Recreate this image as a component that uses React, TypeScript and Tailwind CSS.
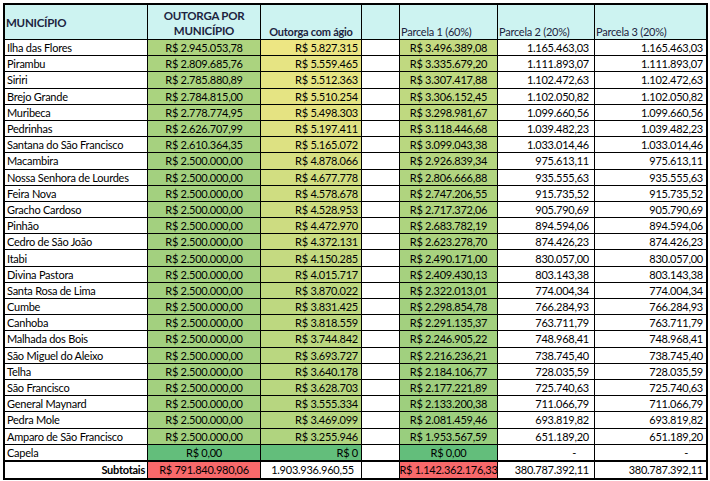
const rows: [string, string, number, string, number, string, number, string][] = [
  ["Ilha das Flores", "R$ 2.945.053,78", 2945053.78, "R$ 5.827.315", 5827315, "R$ 3.496.389,08", 3496389.08, "1.165.463,03"],
  ["Pirambu", "R$ 2.809.685,76", 2809685.76, "R$ 5.559.465", 5559465, "R$ 3.335.679,20", 3335679.2, "1.111.893,07"],
  ["Siriri", "R$ 2.785.880,89", 2785880.89, "R$ 5.512.363", 5512363, "R$ 3.307.417,88", 3307417.88, "1.102.472,63"],
  ["Brejo Grande", "R$ 2.784.815,00", 2784815, "R$ 5.510.254", 5510254, "R$ 3.306.152,45", 3306152.45, "1.102.050,82"],
  ["Muribeca", "R$ 2.778.774,95", 2778774.95, "R$ 5.498.303", 5498303, "R$ 3.298.981,67", 3298981.67, "1.099.660,56"],
  ["Pedrinhas", "R$ 2.626.707,99", 2626707.99, "R$ 5.197.411", 5197411, "R$ 3.118.446,68", 3118446.68, "1.039.482,23"],
  ["Santana do São Francisco", "R$ 2.610.364,35", 2610364.35, "R$ 5.165.072", 5165072, "R$ 3.099.043,38", 3099043.38, "1.033.014,46"],
  ["Macambira", "R$ 2.500.000,00", 2500000, "R$ 4.878.066", 4878066, "R$ 2.926.839,34", 2926839.34, "975.613,11"],
  ["Nossa Senhora de Lourdes", "R$ 2.500.000,00", 2500000, "R$ 4.677.778", 4677778, "R$ 2.806.666,88", 2806666.88, "935.555,63"],
  ["Feira Nova", "R$ 2.500.000,00", 2500000, "R$ 4.578.678", 4578678, "R$ 2.747.206,55", 2747206.55, "915.735,52"],
  ["Gracho Cardoso", "R$ 2.500.000,00", 2500000, "R$ 4.528.953", 4528953, "R$ 2.717.372,06", 2717372.06, "905.790,69"],
  ["Pinhão", "R$ 2.500.000,00", 2500000, "R$ 4.472.970", 4472970, "R$ 2.683.782,19", 2683782.19, "894.594,06"],
  ["Cedro de São João", "R$ 2.500.000,00", 2500000, "R$ 4.372.131", 4372131, "R$ 2.623.278,70", 2623278.7, "874.426,23"],
  ["Itabi", "R$ 2.500.000,00", 2500000, "R$ 4.150.285", 4150285, "R$ 2.490.171,00", 2490171, "830.057,00"],
  ["Divina Pastora", "R$ 2.500.000,00", 2500000, "R$ 4.015.717", 4015717, "R$ 2.409.430,13", 2409430.13, "803.143,38"],
  ["Santa Rosa de Lima", "R$ 2.500.000,00", 2500000, "R$ 3.870.022", 3870022, "R$ 2.322.013,01", 2322013.01, "774.004,34"],
  ["Cumbe", "R$ 2.500.000,00", 2500000, "R$ 3.831.425", 3831425, "R$ 2.298.854,78", 2298854.78, "766.284,93"],
  ["Canhoba", "R$ 2.500.000,00", 2500000, "R$ 3.818.559", 3818559, "R$ 2.291.135,37", 2291135.37, "763.711,79"],
  ["Malhada dos Bois", "R$ 2.500.000,00", 2500000, "R$ 3.744.842", 3744842, "R$ 2.246.905,22", 2246905.22, "748.968,41"],
  ["São Miguel do Aleixo", "R$ 2.500.000,00", 2500000, "R$ 3.693.727", 3693727, "R$ 2.216.236,21", 2216236.21, "738.745,40"],
  ["Telha", "R$ 2.500.000,00", 2500000, "R$ 3.640.178", 3640178, "R$ 2.184.106,77", 2184106.77, "728.035,59"],
  ["São Francisco", "R$ 2.500.000,00", 2500000, "R$ 3.628.703", 3628703, "R$ 2.177.221,89", 2177221.89, "725.740,63"],
  ["General Maynard", "R$ 2.500.000,00", 2500000, "R$ 3.555.334", 3555334, "R$ 2.133.200,38", 2133200.38, "711.066,79"],
  ["Pedra Mole", "R$ 2.500.000,00", 2500000, "R$ 3.469.099", 3469099, "R$ 2.081.459,46", 2081459.46, "693.819,82"],
  ["Amparo de São Francisco", "R$ 2.500.000,00", 2500000, "R$ 3.255.946", 3255946, "R$ 1.953.567,59", 1953567.59, "651.189,20"],
  ["Capela", "R$ 0,00", 0, "R$ 0", 0, "R$ 0,00", 0, "-"],
];

// excel-ish two colour scale, green (min) -> yellow (max)
const scale = (v: number, max: number) => {
  const t = Math.min(1, v / max);
  const r = Math.round(0x63 + t * (0xff - 0x63));
  const g = Math.round(0xbe + t * (0xeb - 0xbe));
  const b = Math.round(0x7b + t * (0x84 - 0x7b));
  return `rgb(${r}, ${g}, ${b})`;
};

const App = () => {
  return (
    <div className="w-[710px] h-[481px] bg-white pl-[3px] pt-[3px] font-['Lato',sans-serif] text-[11px] tracking-[-0.25px] leading-none text-black whitespace-nowrap">
      <div className="w-[705px] border-2 border-black">
        {/* Header */}
        <div className="flex h-[35px] border-b border-black bg-[#cdf3f1] text-[#1c2440]">
          <div className="w-[143px] border-r border-black flex items-center pl-[1px] pt-[2px] font-bold text-[11.5px]">MUNICÍPIO</div>
          <div className="w-[113px] border-r border-black flex items-center justify-center text-center font-bold text-[11.5px] leading-[15px] pt-[1px]">
            OUTORGA POR<br />MUNICÍPIO
          </div>
          <div className="w-[101px] border-r border-black flex items-end justify-center pb-[2px] font-bold">Outorga com ágio</div>
          <div className="w-[38px] border-r border-black" />
          <div className="w-[98px] border-r border-black flex items-end pl-[1px] pb-[2px]">Parcela 1 (60%)</div>
          <div className="w-[97px] border-r border-black flex items-end pl-[1px] pb-[2px]">Parcela 2 (20%)</div>
          <div className="flex-1 flex items-end pl-[1px] pb-[2px]">Parcela 3 (20%)</div>
        </div>

        {/* Rows */}
        {rows.map(([name, o, ov, a, av, p1, p1v, p2]) => (
          <div key={name} className="flex h-[16.2px] border-b border-black">
            <div className="w-[143px] border-r border-black flex items-center pl-[2px]">{name}</div>
            <div className="w-[113px] border-r border-black flex items-center justify-center" style={{ background: scale(ov, 6100000) }}>{o}</div>
            <div className="w-[101px] border-r border-black flex items-center justify-end pr-[3px]" style={{ background: scale(av, 6600000) }}>{a}</div>
            <div className="w-[38px] border-r border-black" />
            <div className="w-[98px] border-r border-black flex items-center justify-center" style={{ background: scale(p1v, 5600000) }}>{p1}</div>
            {p2 === "-" ? (
              <>
                <div className="w-[97px] border-r border-black flex items-center justify-end pr-[18px]">-</div>
                <div className="flex-1 flex items-center justify-end pr-[18px]">-</div>
              </>
            ) : (
              <>
                <div className="w-[97px] border-r border-black flex items-center justify-end pr-[5px]">{p2}</div>
                <div className="flex-1 flex items-center justify-end pr-[3px]">{p2}</div>
              </>
            )}
          </div>
        ))}

        {/* Subtotals */}
        <div className="flex h-[17px] border-t border-black">
          <div className="w-[143px] border-r border-black flex items-center justify-end pr-[2px] font-bold">Subtotais</div>
          <div className="w-[113px] border-r border-black flex items-center justify-center bg-[#f8696b]">R$ 791.840.980,06</div>
          <div className="w-[101px] border-r border-black flex items-center justify-end pr-[7px]">1.903.936.960,55</div>
          <div className="w-[38px] border-r border-black" />
          <div className="w-[98px] border-r border-black flex items-center justify-center bg-[#f8696b]">R$ 1.142.362.176,33</div>
          <div className="w-[97px] border-r border-black flex items-center justify-end pr-[5px]">380.787.392,11</div>
          <div className="flex-1 flex items-center justify-end pr-[3px]">380.787.392,11</div>
        </div>
      </div>
    </div>
  );
};

export default App;
